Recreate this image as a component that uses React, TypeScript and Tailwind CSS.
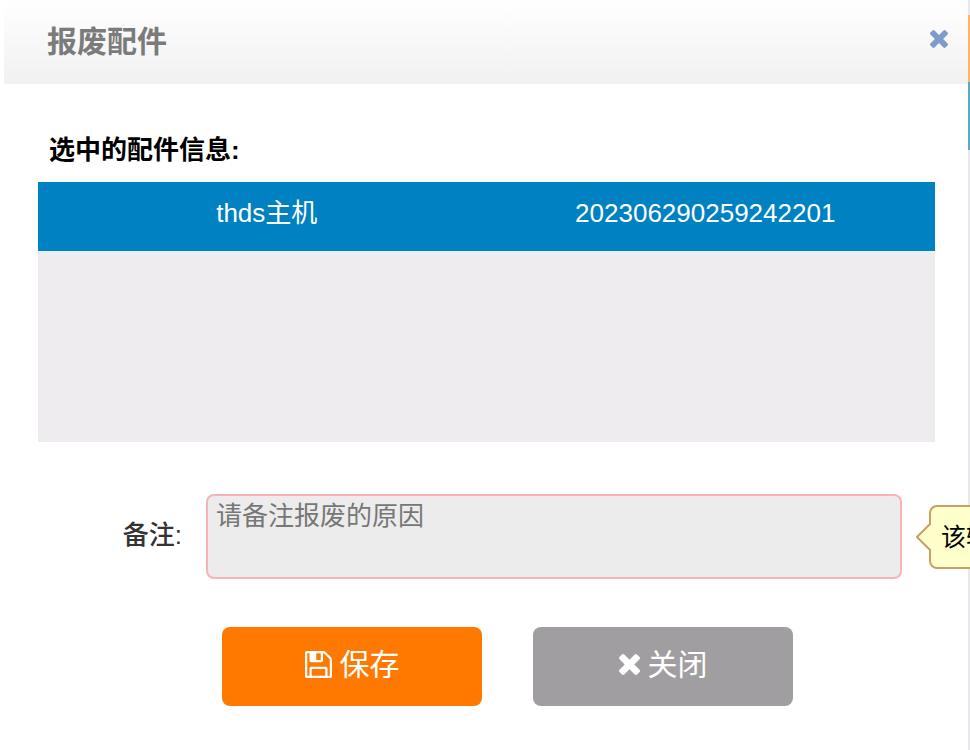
import {useState} from "react"

const rows = [
  {id: 1, name: "thds主机", code: "202306290259242201"},
]

function TimesIcon({className}: {className?: string}) {
  return (
    <svg viewBox="302 366 1188 1188" fill="currentColor" aria-hidden="true" className={className}>
      <path d="M1490 1322q0 40-28 68l-136 136q-28 28-68 28t-68-28l-294-294-294 294q-28 28-68 28t-68-28l-136-136q-28-28-28-68t28-68l294-294-294-294q-28-28-28-68t28-68l136-136q28-28 68-28t68 28l294 294 294-294q28-28 68-28t68 28l136 136q28 28 28 68t-28 68l-294 294 294 294q28 28 28 68z" />
    </svg>
  )
}

function SaveIcon({className}: {className?: string}) {
  return (
    <svg viewBox="128 128 1536 1536" fill="currentColor" aria-hidden="true" className={className}>
      <path d="M512 1536h768v-384h-768v384zm896 0h128v-896q0-14-10-38.500t-20-34.500l-281-281q-10-10-34-20t-39-10v416q0 40-28 68t-68 28h-576q-40 0-68-28t-28-68v-416h-128v1280h128v-416q0-40 28-68t68-28h832q40 0 68 28t28 68v416zm-384-928v-320q0-13-9.500-22.500t-22.500-9.500h-192q-13 0-22.500 9.500t-9.500 22.500v320q0 13 9.500 22.500t22.500 9.500h192q13 0 22.500-9.500t9.500-22.500zm640 32v928q0 40-28 68t-68 28h-1344q-40 0-68-28t-28-68v-1344q0-40 28-68t68-28h928q40 0 88 20t76 48l280 280q28 28 48 76t20 88z" />
    </svg>
  )
}

function App() {
  const [remark, setRemark] = useState("")

  return (
    <div className="flex min-h-screen overflow-hidden bg-white pl-1 font-['Liberation_Sans','Noto_Sans_CJK_SC',sans-serif] text-[26px] leading-8 text-black">
      <main className="min-w-0 flex-1">
        <header className="flex h-[84px] items-center justify-between bg-linear-to-b from-white to-[#f1f1f1] pr-5 pl-[43px]">
          <h1 className="text-[30px] font-bold text-[#7b7b7b]">报废配件</h1>
          <button type="button" aria-label="关闭窗口" className="mt-[-6px] text-[#7f9bc9]">
            <TimesIcon className="size-[18px]" />
          </button>
        </header>

        <section className="mt-[50px] mr-[33px] ml-[34px]">
          <h2 className="pl-[11px] font-bold">选中的配件信息:</h2>
          <div className="mt-4 h-[260px] bg-[#eeecef]">
            <table className="w-full table-fixed border-collapse">
              <tbody>
                {rows.map((row) => (
                  <tr key={row.id} className="h-[69px] bg-[#0081c2] text-center text-white">
                    <td className="w-[51%] pb-2">{row.name}</td>
                    <td className="pr-5 pb-2">{row.code}</td>
                  </tr>
                ))}
              </tbody>
            </table>
          </div>
        </section>

        <form onSubmit={(e) => e.preventDefault()}>
          <div className="mt-[52px] flex items-center">
            <label htmlFor="remark" className="w-[202px] shrink-0 pr-6 pb-1 text-right font-medium text-[#333]">备注:</label>
            <div className="relative min-w-0 flex-1 pr-[66px]">
              <textarea
                id="remark"
                value={remark}
                onChange={(e) => setRemark(e.target.value)}
                placeholder="请备注报废的原因"
                className="block h-[85px] w-full resize-none rounded-lg border-2 border-[#f8b4b4] bg-[#ececec] px-2 py-1 outline-none placeholder:text-[#777]"
              />
              <div role="tooltip" className="absolute top-[11px] left-full -ml-[39px] h-16 rounded-lg border-2 border-[#c9a063] bg-[#ffffcc] pr-4 pl-2.5 text-[25px] leading-[60px] whitespace-nowrap">
                <svg viewBox="0 0 15 28" aria-hidden="true" className="absolute top-4 -left-[15px] h-7 w-[15px]">
                  <path d="M15 0L1 14L15 28" fill="#ffffcc" stroke="#c9a063" strokeWidth="2" />
                </svg>
                该输入项为必输项
              </div>
            </div>
          </div>

          <div className="mt-12 flex gap-[51px] pl-[218px] text-[30px] text-white">
            <button type="submit" className="flex h-[79px] w-[260px] items-center justify-center gap-2 rounded-lg bg-[#ff7800] pb-1">
              <SaveIcon className="size-[27px]" />
              保存
            </button>
            <button type="button" className="flex h-[79px] w-[260px] items-center justify-center gap-2 rounded-lg bg-[#a19ea1] pb-1">
              <TimesIcon className="size-[21px]" />
              关闭
            </button>
          </div>
        </form>
      </main>

      <aside className="flex w-0.5 shrink-0 flex-col bg-[#e8e8ec] pt-[15px]">
        <div className="h-[67px] bg-[#fdb272]" />
        <div className="h-[68px] bg-[#5aa9cb]" />
      </aside>
    </div>
  )
}

export default App
